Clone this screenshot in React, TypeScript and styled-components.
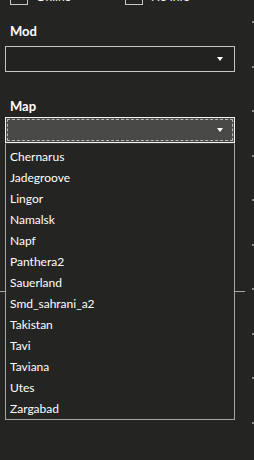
import React from "react";
import styled, { createGlobalStyle } from "styled-components";

const Global = createGlobalStyle`
  html, body { margin: 0; padding: 0; }
  body {
    background: #242523;
    color: #ffffff;
    font-family: "Segoe UI", Lato, "Noto Sans", sans-serif;
    overflow: hidden;
    width: 254px;
    height: 460px;
  }
`;

const Page = styled.div`
  display: flex;
  width: 254px;
  height: 460px;
  overflow: hidden;
`;

const Main = styled.div`
  flex: 1;
  display: flex;
  flex-direction: column;
`;

const Rail = styled.div`
  width: 2px;
  display: flex;
  flex-direction: column;
  gap: 42.5px;
  padding-top: 21px;
`;

const Tick = styled.div`
  width: 2px;
  height: 2px;
  background: #8a8b89;
`;

const CheckRow = styled.div`
  display: flex;
  margin-top: -13px;
  height: 18px;
  padding-left: 10px;
`;

const CheckItem = styled.label<{ $w: number }>`
  display: flex;
  align-items: center;
  gap: 8px;
  width: ${(p) => p.$w}px;
  font-size: 12px;
  color: #fff;
`;

const Box = styled.span`
  width: 16px;
  height: 16px;
  border: 1px solid #c8c8c8;
  box-sizing: content-box;
`;

const Label = styled.div<{ $top: number }>`
  margin-top: ${(p) => p.$top}px;
  padding-left: 10px;
  font-size: 13px;
  font-weight: 700;
  line-height: 17px;
  height: 17px;
  color: #fff;
`;

const SelectWrap = styled.div<{ $top: number }>`
  position: relative;
  margin-top: ${(p) => p.$top}px;
  margin-left: 5px;
  width: 230px;
`;

const Select = styled.div<{ $focus?: boolean }>`
  box-sizing: border-box;
  height: 26px;
  border: 1px solid ${(p) => (p.$focus ? "#f2f2f2" : "#c6c6c6")};
  background: ${(p) => (p.$focus ? "#494a48" : "#222321")};
  padding: 1px;
  display: flex;
`;

const FocusRing = styled.div<{ $focus?: boolean }>`
  flex: 1;
  border: 1px dashed ${(p) => (p.$focus ? "#b8b8b6" : "transparent")};
  display: flex;
  align-items: center;
  justify-content: flex-end;
  padding-right: 9px;
`;

const Arrow = styled.span`
  width: 0;
  height: 0;
  border-left: 3px solid transparent;
  border-right: 3px solid transparent;
  border-top: 4px solid #ffffff;
`;

const List = styled.ul`
  position: absolute;
  left: 0;
  top: 26px;
  width: 230px;
  box-sizing: border-box;
  margin: 0;
  padding: 2px 0 0;
  list-style: none;
  background: #242523;
  border: 1px solid #aaa49e;
  border-top: 1px solid #3a3b39;
  z-index: 2;
`;

const Item = styled.li`
  height: 21px;
  line-height: 21px;
  padding-left: 4px;
  font-size: 12px;
  color: #fff;
  white-space: nowrap;
`;

const Separator = styled.div`
  margin-top: 148px;
  width: 245px;
  height: 1px;
  background: #a9a9a7;
`;

const maps = [
  "Chernarus",
  "Jadegroove",
  "Lingor",
  "Namalsk",
  "Napf",
  "Panthera2",
  "Sauerland",
  "Smd_sahrani_a2",
  "Takistan",
  "Tavi",
  "Taviana",
  "Utes",
  "Zargabad",
];

export default function App() {
  return (
    <>
      <Global />
      <Page>
        <Main>
          <CheckRow>
            <CheckItem $w={115}>
              <Box />
              Online
            </CheckItem>
            <CheckItem $w={110}>
              <Box />
              No info
            </CheckItem>
          </CheckRow>
          <Label $top={18}>Mod</Label>
          <SelectWrap $top={6}>
            <Select>
              <FocusRing>
                <Arrow />
              </FocusRing>
            </Select>
          </SelectWrap>
          <Label $top={26}>Map</Label>
          <SelectWrap $top={2}>
            <Select $focus>
              <FocusRing $focus>
                <Arrow />
              </FocusRing>
            </Select>
            <List>
              {maps.map((m) => (
                <Item key={m}>{m}</Item>
              ))}
            </List>
          </SelectWrap>
          <Separator />
        </Main>
        <Rail>
          {Array.from({ length: 10 }).map((_, i) => (
            <Tick key={i} />
          ))}
        </Rail>
      </Page>
    </>
  );
}
